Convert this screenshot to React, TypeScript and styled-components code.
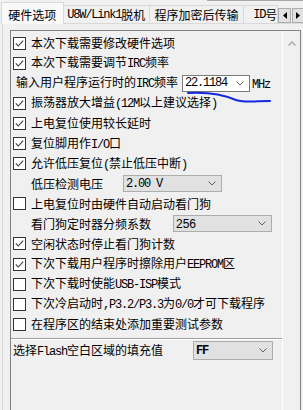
import React from "react";
import styled, { createGlobalStyle } from "styled-components";

const GlobalStyle = createGlobalStyle`
  html, body { margin: 0; padding: 0; background: #f0f0f0; }
  body {
    font-family: "Noto Sans CJK SC", "Noto Sans", sans-serif;
    font-size: 12px;
    color: #000;
  }
`;

const Root = styled.div`
  position: relative;
  width: 303px;
  height: 410px;
  overflow: hidden;
  background: #f0f0f0;
  display: flex;
  flex-direction: column;
`;

const TopEdge = styled.div`
  height: 1px;
  margin-left: 207px;
  background: #a8a8a8;
  flex: 0 0 1px;
`;

const TabBar = styled.div`
  display: flex;
  align-items: flex-end;
  height: 22px;
  flex: 0 0 22px;
`;

const Tab = styled.div<{ $active?: boolean; $w: number; $pl?: number }>`
  box-sizing: border-box;
  width: ${(p) => p.$w}px;
  height: ${(p) => (p.$active ? 22 : 18)}px;
  margin-left: ${(p) => (p.$active ? 1 : 0)}px;
  margin-bottom: ${(p) => (p.$active ? -1 : 0)}px;
  position: relative;
  z-index: ${(p) => (p.$active ? 2 : 1)};
  background: ${(p) => (p.$active ? "#f9f9f9" : "#f0f0f0")};
  border-top: 1px solid #d9d9d9;
  border-left: ${(p) => (p.$active ? "1px solid #d9d9d9" : "none")};
  border-right: 1px solid #d9d9d9;
  display: flex;
  align-items: center;
  justify-content: ${(p) => (p.$pl !== undefined ? "flex-start" : "center")};
  padding-left: ${(p) => p.$pl ?? 0}px;
  padding-top: ${(p) => (p.$active ? 2 : 1)}px;
  white-space: nowrap;
  overflow: hidden;
  line-height: 14px;
`;

const ArrowGroup = styled.div`
  display: flex;
  align-self: flex-end;
  margin-left: auto;
  height: 15px;
  position: relative;
  z-index: 3;
`;

const ArrowBtn = styled.div`
  box-sizing: border-box;
  width: 13px;
  height: 15px;
  border: 1px solid #adadad;
  background: #e1e1e1;
  display: flex;
  align-items: center;
  justify-content: center;
  & + & { margin-left: 1px; width: 11px; border-right: none; }
`;

const Panel = styled.div`
  flex: 1;
  margin-left: 2px;
  border-top: 1px solid #d9d9d9;
  border-left: 1px solid #d9d9d9;
  padding: 6px 0 0 7px;
  display: flex;
  min-height: 0;
`;

const ListBox = styled.div`
  box-sizing: border-box;
  width: 291px;
  flex: 0 0 291px;
  border: 1px solid #828282;
  border-bottom: none;
  display: flex;
`;

const Content = styled.div`
  flex: 1;
  padding-top: 2px;
  display: flex;
  flex-direction: column;
  min-width: 0;
`;

const ScrollBar = styled.div`
  width: 17px;
  flex: 0 0 17px;
  border-left: 1px solid #ffffff;
  background: #f0f0f0;
  display: flex;
  justify-content: center;
  padding-top: 10px;
  box-sizing: content-box;
`;

const Row = styled.div<{ $pl?: number; $h?: number }>`
  height: ${(p) => p.$h ?? 20.1}px;
  flex: 0 0 ${(p) => p.$h ?? 20.1}px;
  display: flex;
  align-items: center;
  padding-left: ${(p) => p.$pl ?? 2}px;
  white-space: nowrap;
`;

const Box = styled.div`
  box-sizing: border-box;
  width: 13px;
  height: 13px;
  flex: 0 0 13px;
  border: 1px solid #333333;
  background: #ffffff;
  margin-right: 5px;
  display: flex;
  align-items: center;
  justify-content: center;
`;

const Label = styled.span<{ $w?: number }>`
  display: inline-block;
  width: ${(p) => (p.$w ? `${p.$w}px` : "auto")};
  flex: 0 0 auto;
  line-height: 14px;
`;

const Latin = styled.span`
  font-family: "Liberation Mono", monospace;
  font-size: 12px;
  letter-spacing: -1.2px;
`;

const Combo = styled.div<{ $w: number; $h?: number; $edit?: boolean }>`
  box-sizing: border-box;
  width: ${(p) => p.$w}px;
  height: ${(p) => p.$h ?? 17}px;
  flex: 0 0 ${(p) => p.$w}px;
  border: 1px solid ${(p) => (p.$edit ? "#7a7a7a" : "#adadad")};
  background: ${(p) => (p.$edit ? "#ffffff" : "#e1e1e1")};
  display: flex;
  align-items: center;
  padding-left: 2px;
  padding-right: 5px;
`;

const ComboText = styled.span<{ $kind: "mono" | "sans" | "bold" }>`
  font-family: ${(p) =>
    p.$kind === "sans" ? '"Liberation Sans", Arial, sans-serif' : '"Liberation Mono", monospace'};
  font-size: 12px;
  font-weight: ${(p) => (p.$kind === "bold" ? 700 : 400)};
  letter-spacing: ${(p) => (p.$kind === "sans" ? 0 : -1.2)}px;
  flex: 1;
`;

const Unit = styled.span`
  margin-left: 2px;
`;

const Separator = styled.div`
  height: 1px;
  margin-top: 4px;
  background: #a0a0a0;
  border-bottom: 1px solid #ffffff;
  flex: 0 0 1px;
`;

const Overlay = styled.svg`
  position: absolute;
  left: 0;
  top: 0;
  pointer-events: none;
`;

const T = ({ s }: { s: string }) => (
  <>
    {s
      .split(/([\x20-\x7E]+)/)
      .filter(Boolean)
      .map((part, i) =>
        /^[\x20-\x7E]+$/.test(part) ? (
          <Latin key={i}>{part}</Latin>
        ) : (
          <React.Fragment key={i}>{part}</React.Fragment>
        )
      )}
  </>
);

const Check = ({ on }: { on: boolean }) => (
  <Box>
    {on && (
      <svg width="11" height="11" viewBox="0 0 11 11">
        <polyline points="1.8,5.4 4.2,8 9.2,2.6" fill="none" stroke="#3a3a3a" strokeWidth="1.1" />
      </svg>
    )}
  </Box>
);

const CheckRow = ({ on, text }: { on: boolean; text: string }) => (
  <Row>
    <Check on={on} />
    <Label>
      <T s={text} />
    </Label>
  </Row>
);

const Chevron = () => (
  <svg width="8" height="5" viewBox="0 0 8 5">
    <polyline points="0.5,0.5 4,4 7.5,0.5" fill="none" stroke="#606060" strokeWidth="1" />
  </svg>
);

export default function App() {
  return (
    <>
      <GlobalStyle />
      <Root>
        <TopEdge />
        <TabBar>
          <Tab $active $w={63}>硬件选项</Tab>
          <Tab $w={87}>
            <T s="U8W/Link1脱机" />
          </Tab>
          <Tab $w={95}>程序加密后传输</Tab>
          <Tab $w={34} $pl={9}>
            <T s="ID号" />
          </Tab>
          <ArrowGroup>
            <ArrowBtn>
              <svg width="4" height="7" viewBox="0 0 4 7">
                <polygon points="4,0 0,3.5 4,7" fill="#000" />
              </svg>
            </ArrowBtn>
            <ArrowBtn>
              <svg width="4" height="7" viewBox="0 0 4 7">
                <polygon points="0,0 4,3.5 0,7" fill="#000" />
              </svg>
            </ArrowBtn>
          </ArrowGroup>
        </TabBar>
        <Panel>
          <ListBox>
            <Content>
              <CheckRow on text="本次下载需要修改硬件选项" />
              <CheckRow on text="本次下载需要调节IRC频率" />
              <Row $pl={5}>
                <Label $w={166}>
                  <T s="输入用户程序运行时的IRC频率" />
                </Label>
                <Combo $w={68} $edit>
                  <ComboText $kind="mono">22.1184</ComboText>
                  <Chevron />
                </Combo>
                <Unit>
                  <Latin>MHz</Latin>
                </Unit>
              </Row>
              <CheckRow on text="振荡器放大增益(12M以上建议选择)" />
              <CheckRow on text="上电复位使用较长延时" />
              <CheckRow on text="复位脚用作I/O口" />
              <CheckRow on text="允许低压复位(禁止低压中断)" />
              <Row $pl={20}>
                <Label $w={92}>低压检测电压</Label>
                <Combo $w={99}>
                  <ComboText $kind="mono">2.00 V</ComboText>
                  <Chevron />
                </Combo>
              </Row>
              <CheckRow on={false} text="上电复位时由硬件自动启动看门狗" />
              <Row $pl={20}>
                <Label $w={142}>看门狗定时器分频系数</Label>
                <Combo $w={99}>
                  <ComboText $kind="sans">256</ComboText>
                  <Chevron />
                </Combo>
              </Row>
              <CheckRow on text="空闲状态时停止看门狗计数" />
              <CheckRow on text="下次下载用户程序时擦除用户EEPROM区" />
              <CheckRow on={false} text="下次下载时使能USB-ISP模式" />
              <CheckRow on={false} text="下次冷启动时,P3.2/P3.3为0/0才可下载程序" />
              <CheckRow on={false} text="在程序区的结束处添加重要测试参数" />
              <Separator />
              <Row $h={21} $pl={2}>
                <Label $w={180}>
                  <T s="选择Flash空白区域的填充值" />
                </Label>
                <Combo $w={80} $h={19}>
                  <ComboText $kind="bold">FF</ComboText>
                  <Chevron />
                </Combo>
              </Row>
            </Content>
            <ScrollBar>
              <svg width="8" height="5" viewBox="0 0 8 5">
                <polyline points="0.5,4.5 4,1 7.5,4.5" fill="none" stroke="#a6a6a6" strokeWidth="1.3" />
              </svg>
            </ScrollBar>
          </ListBox>
        </Panel>
        <Overlay width="303" height="410" viewBox="0 0 303 410">
          <path
            d="M188 93 C 205 92, 222 94, 236 100 C 246 103, 256 101, 270 101"
            fill="none"
            stroke="#1428e0"
            strokeWidth="2"
            strokeLinecap="round"
          />
        </Overlay>
      </Root>
    </>
  );
}
